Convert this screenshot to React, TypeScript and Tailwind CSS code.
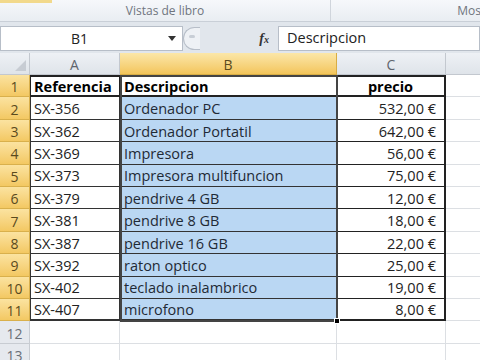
import React from 'react';

const rows: [string, string, string][] = [
  ['SX-356', 'Ordenador PC', '532,00 €'],
  ['SX-362', 'Ordenador Portatil', '642,00 €'],
  ['SX-369', 'Impresora', '56,00 €'],
  ['SX-373', 'Impresora multifuncion', '75,00 €'],
  ['SX-379', 'pendrive 4 GB', '12,00 €'],
  ['SX-381', 'pendrive 8 GB', '18,00 €'],
  ['SX-387', 'pendrive 16 GB', '22,00 €'],
  ['SX-392', 'raton optico', '25,00 €'],
  ['SX-402', 'teclado inalambrico', '19,00 €'],
  ['SX-407', 'microfono', '8,00 €'],
];

const font = { fontFamily: '"Open Sans", "Liberation Sans", sans-serif' };

const RowHead = ({ n, sel }: { n: number; sel: boolean }) => (
  <div
    className={`h-[22.4px] flex items-center justify-center pt-[2px] text-[14px] border-r border-b ${
      sel
        ? 'bg-gradient-to-b from-[#fbe3a0] to-[#f3c862] text-[#5a4a1e] border-[#d9b04c]'
        : 'bg-[#e6e9ee] text-[#6a6f77] border-[#c8ccd2]'
    }`}
  >
    {n}
  </div>
);

const App: React.FC = () => {
  return (
    <div className="w-[480px] h-[360px] overflow-hidden bg-white flex flex-col" style={font}>
      {/* Ribbon bottom */}
      <div className="h-[22px] shrink-0 bg-gradient-to-b from-[#f6f8fb] to-[#e9edf2] border-b border-[#c9cfd7] flex items-center text-[12px] text-[#6f757e] relative">
        <div className="absolute left-0 top-0 w-[52px] h-[3px] bg-[#f2d98c]" />
        <div className="w-[331px] h-full flex items-center justify-center border-r border-[#d0d5dc]">
          <span>Vistas de libro</span>
        </div>
        <div className="flex-1 flex justify-end">
          <span className="mr-[-1px]">Mos</span>
        </div>
      </div>

      {/* Formula bar */}
      <div className="h-[31px] shrink-0 bg-[#e1e6ec] flex items-center pt-[1px]">
        <div className="h-[25px] w-[183px] bg-white border border-[#b7bec8] flex items-center relative">
          <span className="flex-1 text-center text-[14px] text-[#222] pr-[24px]">B1</span>
          <span className="absolute right-[6px] top-[9px] w-0 h-0 border-l-[4px] border-r-[4px] border-t-[5px] border-l-transparent border-r-transparent border-t-[#333]" />
        </div>
        <div className="h-[25px] w-[95px] flex items-center relative">
          <div className="absolute left-0 top-[1px] w-[17px] h-[23px] rounded-l-full border border-r-0 border-[#b7bec8] bg-[#eef1f5]" />
          <span className="absolute left-[6px] top-[9px] w-[6px] h-[3px] rounded-full bg-[#c8ced6]" />
          <span
            className="ml-auto mr-[9px] text-[14px] italic font-bold text-[#333]"
            style={{ fontFamily: '"Liberation Serif", serif' }}
          >
            f<span className="text-[10px]">x</span>
          </span>
        </div>
        <div className="h-[25px] flex-1 bg-white border border-[#b7bec8] flex items-center pl-[8px] text-[14.5px] text-[#222]">
          Descripcion
        </div>
      </div>

      {/* Grid */}
      <div className="grid grid-cols-[30px_90px_217px_109px_1fr] relative">
        {/* Column headers */}
        <div className="h-[22px] bg-gradient-to-b from-[#eef1f5] to-[#dfe4ea] border-r border-b border-[#c3c8cf] relative">
          <span className="absolute right-[3px] bottom-[3px] w-0 h-0 border-b-[11px] border-l-[11px] border-b-[#c7ccd3] border-l-transparent" />
        </div>
        <div className="h-[22px] bg-gradient-to-b from-[#eef1f5] to-[#dfe4ea] border-r border-b border-[#c3c8cf] flex items-center justify-center pt-[1px] text-[14px] text-[#5f656d]">A</div>
        <div className="h-[22px] bg-gradient-to-b from-[#fbe7a8] to-[#f3c55a] border-r border-b border-[#d8ad45] flex items-center justify-center pt-[1px] text-[14px] text-[#5a4a1e]">B</div>
        <div className="h-[22px] bg-gradient-to-b from-[#eef1f5] to-[#dfe4ea] border-r border-b border-[#c3c8cf] flex items-center justify-center pt-[1px] text-[14px] text-[#5f656d]">C</div>
        <div className="h-[22px] bg-gradient-to-b from-[#eef1f5] to-[#dfe4ea] border-b border-[#c3c8cf]" />

        {/* Row 1 */}
        <RowHead n={1} sel />
        <div className="h-[22.4px] border-t-2 border-l border-r border-b-2 border-[#222] flex items-center pt-[1px] pl-[3px] text-[14.5px] font-bold text-black">Referencia</div>
        <div className="h-[22.4px] border-t-2 border-r border-b-2 border-[#222] flex items-center pt-[1px] pl-[4px] text-[14.5px] font-bold text-black">Descripcion</div>
        <div className="h-[22.4px] border-t-2 border-r-2 border-b-2 border-[#222] flex items-center justify-center pt-[1px] text-[14.5px] font-bold text-black">precio</div>
        <div className="h-[22.4px] border-b border-[#dcdfe3]" />

        {rows.map(([ref, desc, price], i) => {
          const last = i === rows.length - 1;
          const b = last ? 'border-b-2' : 'border-b';
          return (
            <React.Fragment key={ref}>
              <RowHead n={i + 2} sel />
              <div className={`h-[22.4px] border-l border-r ${b} border-[#333] flex items-center pt-[2px] pl-[3px] text-[14.5px] text-[#222]`}>{ref}</div>
              <div className={`h-[22.4px] bg-[#bad7f3] border-r ${b} border-[#333] flex items-center pt-[2px] pl-[4px] text-[14.5px] text-[#1f2a36]`}>{desc}</div>
              <div className={`h-[22.4px] border-r-2 ${b} border-[#222] flex items-center justify-end pt-[2px] pr-[8px] text-[14.5px] text-[#222]`}>{price}</div>
              <div className="h-[22.4px] border-b border-[#dcdfe3]" />
            </React.Fragment>
          );
        })}

        {[12, 13].map((n) => (
          <React.Fragment key={n}>
            <RowHead n={n} sel={false} />
            <div className="h-[22.4px] border-r border-b border-[#dcdfe3]" />
            <div className="h-[22.4px] border-r border-b border-[#dcdfe3]" />
            <div className="h-[22.4px] border-r border-b border-[#dcdfe3]" />
            <div className="h-[22.4px] border-b border-[#dcdfe3]" />
          </React.Fragment>
        ))}

        {/* Selection B1:B11 */}
        <div className="absolute left-[120px] top-[22px] w-[218px] h-[247px] border-2 border-[#444] pointer-events-none" />
        <div className="absolute left-[334px] top-[265px] w-[6px] h-[6px] bg-black border border-white pointer-events-none" />
      </div>
    </div>
  );
};

export default App;
